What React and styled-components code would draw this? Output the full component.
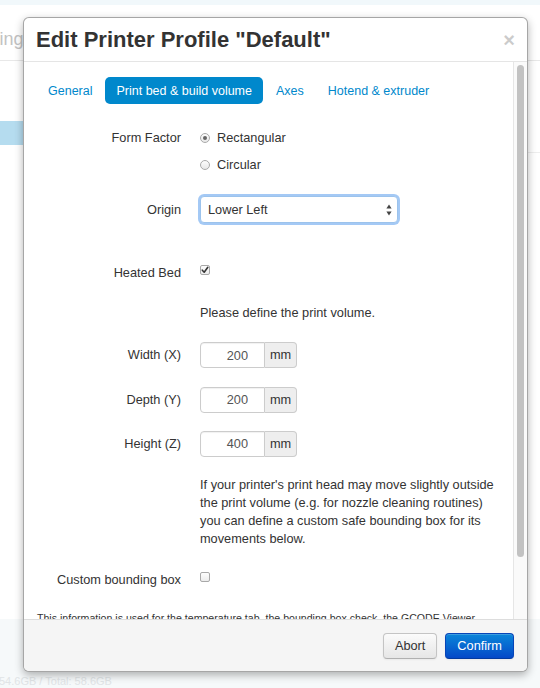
import React from 'react';
import styled, { createGlobalStyle } from 'styled-components';

const GlobalStyle = createGlobalStyle`
  html, body { margin: 0; padding: 0; }
  body {
    font-family: "Liberation Sans", Arial, Helvetica, sans-serif;
    background: #fff;
    color: #333;
    overflow: hidden;
  }
  #root { width: 540px; height: 688px; position: relative; overflow: hidden; }
`;

const FS = '12.75px';

/* ---------- background page ---------- */
const Page = styled.div`
  width: 540px;
  height: 688px;
  display: flex;
  flex-direction: column;
  background: #fff;
`;
const TopStrip = styled.div`
  flex: none;
  height: 5px;
  background: #f1f8fb;
`;
const PageHeader = styled.div`
  flex: none;
  height: 56px;
  box-sizing: border-box;
  padding-top: 14px;
  border-bottom: 1px solid #e8e8e8;
  display: flex;
  align-items: center;
  overflow: hidden;
`;
const PageTitle = styled.h1`
  flex: none;
  margin: 0 0 0 -32.5px;
  font-size: 18px;
  font-weight: normal;
  color: #c2c2c2;
  white-space: nowrap;
`;
const PageMain = styled.div`
  flex: 1;
  display: flex;
`;
const Sidebar = styled.ul`
  width: 200px;
  margin: 0;
  padding: 60px 0 0;
  list-style: none;
`;
const SideItem = styled.li`
  height: 24px;
  background: ${(p) => (p.$active ? '#b5dcef' : 'transparent')};
`;
const Panel = styled.div`
  flex: 1;
  margin-top: 91px;
  border-top: 1px solid #eee;
`;
const PageFooter = styled.div`
  flex: none;
  height: 69px;
  box-sizing: border-box;
  background: #f6f9fa;
  padding-top: 56px;
  font-size: 11px;
  color: #e0e4e6;
  overflow: hidden;
  white-space: nowrap;
`;
const FooterText = styled.span`
  margin-left: -1px;
`;

/* ---------- modal ---------- */
const Modal = styled.div`
  position: absolute;
  left: 23px;
  top: 17px;
  width: 505px;
  height: 655px;
  box-sizing: border-box;
  background: #fff;
  border: 1px solid rgba(0, 0, 0, 0.35);
  border-radius: 6px;
  box-shadow: 0 3px 8px rgba(0, 0, 0, 0.3);
  display: flex;
  flex-direction: column;
  overflow: hidden;
`;
const Header = styled.div`
  flex: none;
  height: 43px;
  padding: 0 12px;
  border-bottom: 1px solid #e5e5e5;
  display: flex;
  align-items: center;
  justify-content: space-between;
`;
const Title = styled.h3`
  margin: 0;
  font-size: 22px;
  font-weight: bold;
  color: #333;
  line-height: 26px;
`;
const Close = styled.button`
  border: 0;
  padding: 0;
  background: none;
  font-family: inherit;
  font-size: 20px;
  font-weight: bold;
  line-height: 20px;
  color: #000;
  opacity: 0.2;
  cursor: pointer;
`;
const BodyWrap = styled.div`
  flex: 1;
  min-height: 0;
  position: relative;
  display: flex;
`;
const Body = styled.div`
  flex: 1;
  overflow: hidden;
  padding: 15px 27px 44px 13px;
`;
const ScrollTrack = styled.div`
  position: absolute;
  top: 0;
  right: 0;
  bottom: 0;
  width: 14px;
  box-sizing: border-box;
  background: #fafafa;
  border-left: 1px solid #e6e6e6;
`;
const ScrollThumb = styled.div`
  position: absolute;
  top: 3px;
  left: 3px;
  right: 3px;
  border-radius: 4px;
  background: #c2c2c2;
`;
const Pills = styled.ul`
  display: flex;
  gap: 2px;
  margin: 0;
  padding: 0;
  list-style: none;
`;
const Pill = styled.li`
  height: 27px;
  padding: 0 11px;
  display: flex;
  align-items: center;
  border-radius: 5px;
  font-size: 12.5px;
  color: ${(p) => (p.$active ? '#fff' : '#0088cc')};
  background: ${(p) => (p.$active ? '#0088cc' : 'transparent')};
  cursor: pointer;
`;
const Form = styled.div`
  display: flex;
  flex-direction: column;
`;
const Group = styled.div`
  display: flex;
  align-items: ${(p) => (p.$center ? 'center' : 'flex-start')};
  margin-top: ${(p) => p.$mt}px;
  font-size: ${FS};
  line-height: 20px;
`;
const Label = styled.div`
  flex: none;
  width: 144px;
  text-align: right;
  color: #333;
`;
const Controls = styled.div`
  margin-left: 19px;
  flex: 1;
  display: flex;
  flex-direction: column;
  gap: 7px;
`;
const Option = styled.label`
  display: flex;
  align-items: center;
  gap: 7px;
  color: #333;
`;
const Radio = styled.span`
  width: 10px;
  height: 10px;
  box-sizing: border-box;
  border-radius: 50%;
  border: 1px solid #aaa;
  background: linear-gradient(#fdfdfd, #e8e8e8);
  display: flex;
  align-items: center;
  justify-content: center;
  &::after {
    content: '';
    width: 4px;
    height: 4px;
    border-radius: 50%;
    background: ${(p) => (p.$checked ? '#666' : 'transparent')};
  }
`;
const Check = styled.span`
  margin-top: 2px;
  width: 10px;
  height: 10px;
  box-sizing: border-box;
  border-radius: 2px;
  border: 1px solid #a8a8a8;
  background: linear-gradient(#fdfdfd, #ececec);
  display: flex;
  align-items: center;
  justify-content: center;
`;
const Select = styled.div`
  width: 198px;
  height: 27px;
  box-sizing: border-box;
  border: 1px solid #9cc3ec;
  border-radius: 4px;
  box-shadow: 0 0 0 2px rgba(134, 183, 241, 0.75);
  background: #fff;
  padding: 0 5px 0 7px;
  display: flex;
  align-items: center;
  justify-content: space-between;
  font-size: ${FS};
  color: #333;
`;
const InputGroup = styled.div`
  display: flex;
  height: 26px;
`;
const NumInput = styled.input`
  width: 65px;
  height: 26px;
  box-sizing: border-box;
  border: 1px solid #ccc;
  border-radius: 4px 0 0 4px;
  padding: 0 16px 0 4px;
  text-align: right;
  font-family: inherit;
  font-size: ${FS};
  color: #555;
  background: #fff;
  box-shadow: inset 0 1px 1px rgba(0, 0, 0, 0.06);
  outline: none;
`;
const AddOn = styled.span`
  width: 32px;
  box-sizing: border-box;
  border: 1px solid #ccc;
  border-left: 0;
  border-radius: 0 4px 4px 0;
  background: #eee;
  display: flex;
  align-items: center;
  justify-content: center;
  font-size: ${FS};
  color: #333;
`;
const Help = styled.p`
  margin: 0;
  font-size: ${FS};
  line-height: 18px;
  color: #333;
`;
const Info = styled.p`
  margin: 21px 0 0;
  font-size: 10.6px;
  line-height: 15px;
  color: #333;
`;
const Footer = styled.div`
  flex: none;
  height: 51px;
  padding: 0 13px;
  border-top: 1px solid #ddd;
  background: #f5f5f5;
  display: flex;
  align-items: center;
  justify-content: flex-end;
  gap: 8px;
`;
const Button = styled.button`
  height: 26px;
  box-sizing: border-box;
  padding: 0 11px;
  border-radius: 4px;
  font-family: inherit;
  font-size: ${FS};
  cursor: pointer;
  color: ${(p) => (p.$primary ? '#fff' : '#333')};
  border: 1px solid ${(p) => (p.$primary ? '#0745b8' : '#c4c4c4')};
  border-bottom-color: ${(p) => (p.$primary ? '#033a9e' : '#b0b0b0')};
  background: ${(p) =>
    p.$primary
      ? 'linear-gradient(#0a86d9, #0449c8)'
      : 'linear-gradient(#fbfbfb, #e6e6e6)'};
  box-shadow: inset 0 1px 0 rgba(255, 255, 255, 0.2), 0 1px 2px rgba(0, 0, 0, 0.05);
`;

const Arrows = () => (
  <svg width="6" height="12" viewBox="0 0 6 12">
    <path d="M3 0.5 L5.6 4.5 H0.4 Z" fill="#444" />
    <path d="M3 11.5 L5.6 7.5 H0.4 Z" fill="#444" />
  </svg>
);

const Tick = () => (
  <svg width="8" height="8" viewBox="0 0 8 8">
    <path d="M1.3 4.2 L3.2 6.2 L6.8 1.3" fill="none" stroke="#333" strokeWidth="1.6" strokeLinecap="round" strokeLinejoin="round" />
  </svg>
);

const volume = [
  { label: 'Width (X)', value: '200', mt: 19 },
  { label: 'Depth (Y)', value: '200', mt: 18.5 },
  { label: 'Height (Z)', value: '400', mt: 18 },
];

export default function App() {
  return (
    <>
      <GlobalStyle />
      <Page>
        <TopStrip />
        <PageHeader>
          <PageTitle>Settings</PageTitle>
        </PageHeader>
        <PageMain>
          <Sidebar>
            <SideItem $active />
          </Sidebar>
          <Panel />
        </PageMain>
        <PageFooter>
          <FooterText>54.6GB / Total: 58.6GB</FooterText>
        </PageFooter>
      </Page>

      <Modal>
        <Header>
          <Title>Edit Printer Profile "Default"</Title>
          <Close aria-label="Close">×</Close>
        </Header>
        <BodyWrap>
          <Body>
            <Pills>
              <Pill>General</Pill>
              <Pill $active>Print bed &amp; build volume</Pill>
              <Pill>Axes</Pill>
              <Pill>Hotend &amp; extruder</Pill>
            </Pills>
            <Form>
              <Group $mt={24}>
                <Label>Form Factor</Label>
                <Controls>
                  <Option>
                    <Radio $checked />
                    Rectangular
                  </Option>
                  <Option>
                    <Radio />
                    Circular
                  </Option>
                </Controls>
              </Group>
              <Group $mt={21} $center>
                <Label>Origin</Label>
                <Controls>
                  <Select>
                    Lower Left
                    <Arrows />
                  </Select>
                </Controls>
              </Group>
              <Group $mt={40}>
                <Label>Heated Bed</Label>
                <Controls>
                  <Check>
                    <Tick />
                  </Check>
                </Controls>
              </Group>
              <Group $mt={20}>
                <Label />
                <Controls>Please define the print volume.</Controls>
              </Group>
              {volume.map((v) => (
                <Group key={v.label} $mt={v.mt} $center>
                  <Label>{v.label}</Label>
                  <Controls>
                    <InputGroup>
                      <NumInput readOnly value={v.value} />
                      <AddOn>mm</AddOn>
                    </InputGroup>
                  </Controls>
                </Group>
              ))}
              <Group $mt={19}>
                <Label />
                <Controls>
                  <Help>
                    If your printer's print head may move slightly outside
                    <br />
                    the print volume (e.g. for nozzle cleaning routines)
                    <br />
                    you can define a custom safe bounding box for its
                    <br />
                    movements below.
                  </Help>
                </Controls>
              </Group>
              <Group $mt={22}>
                <Label>Custom bounding box</Label>
                <Controls>
                  <Check />
                </Controls>
              </Group>
            </Form>
            <Info>
              This information is used for the temperature tab, the bounding box check, the GCODE Viewer
              and/or when slicing from OctoPrint.
            </Info>
          </Body>
          <ScrollTrack>
            <ScrollThumb style={{ height: 492 }} />
          </ScrollTrack>
        </BodyWrap>
        <Footer>
          <Button>Abort</Button>
          <Button $primary>Confirm</Button>
        </Footer>
      </Modal>
    </>
  );
}
